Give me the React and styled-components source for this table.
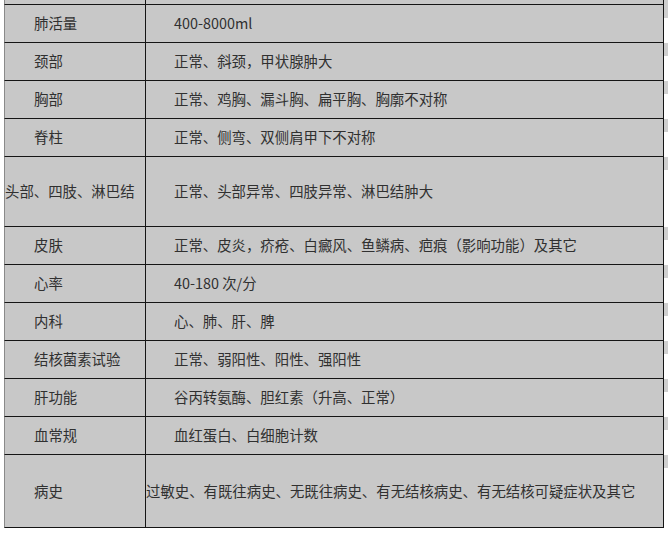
import React from "react";
import styled, { createGlobalStyle } from "styled-components";

const Global = createGlobalStyle`
  html, body { margin: 0; padding: 0; background: #ffffff; }
  body {
    font-family: "Noto Sans CJK SC", "Microsoft YaHei", "Noto Sans", sans-serif;
    color: #303030;
    overflow: hidden;
  }
`;

const Page = styled.div`
  width: 668px;
  height: 533px;
  padding-left: 4px;
  box-sizing: border-box;
  overflow: hidden;
  background: #ffffff;
`;

const Table = styled.div`
  display: flex;
  flex-direction: column;
`;

const Row = styled.div`
  display: grid;
  grid-template-columns: 142px 518px 1fr;
  height: ${(p) => p.$h}px;
`;

const Cell = styled.div`
  box-sizing: border-box;
  background: #c8c8c8;
  border-bottom: 1px solid #151515;
  display: flex;
  align-items: center;
  overflow: hidden;
  white-space: nowrap;
  font-size: 14.4px;
  line-height: 1;
  color: #303030;
`;

const Label = styled(Cell)`
  border-left: 1px solid #8a8a8a;
  border-right: 1px solid #151515;
  padding-left: ${(p) => (p.$indent ?? 29)}px;
`;

const Value = styled(Cell)`
  border-right: 1px solid #151515;
  padding-left: ${(p) => (p.$indent ?? 28)}px;
`;

const Tail = styled.div`
  background: ${(p) =>
    p.$full
      ? "#cfcfcf"
      : "linear-gradient(to bottom, #cfcfcf 0, #cfcfcf 13px, #ffffff 13px)"};
`;

const Text = styled.span`
  display: block;
  flex: none;
`;

const rows = [
  { label: "肺活量", value: "400-8000ml" },
  { label: "颈部", value: "正常、斜颈，甲状腺肿大" },
  { label: "胸部", value: "正常、鸡胸、漏斗胸、扁平胸、胸廓不对称" },
  { label: "脊柱", value: "正常、侧弯、双侧肩甲下不对称" },
  { label: "头部、四肢、淋巴结", value: "正常、头部异常、四肢异常、淋巴结肿大", h: 70, labelIndent: -2 },
  { label: "皮肤", value: "正常、皮炎，疥疮、白癜风、鱼鳞病、疤痕（影响功能）及其它" },
  { label: "心率", value: "40-180 次/分" },
  { label: "内科", value: "心、肺、肝、脾" },
  { label: "结核菌素试验", value: "正常、弱阳性、阳性、强阳性" },
  { label: "肝功能", value: "谷丙转氨酶、胆红素（升高、正常）" },
  { label: "血常规", value: "血红蛋白、白细胞计数" },
  {
    label: "病史",
    value: "过敏史、有既往病史、无既往病史、有无结核病史、有无结核可疑症状及其它",
    h: 73,
    valueIndent: -2,
  },
];

export default function App() {
  return (
    <>
      <Global />
      <Page>
        <Table>
          <Row $h={5}>
            <Label />
            <Value />
            <Tail $full />
          </Row>
          {rows.map((r) => (
            <Row key={r.label} $h={r.h || 38}>
              <Label $indent={r.labelIndent}>
                <Text>{r.label}</Text>
              </Label>
              <Value $indent={r.valueIndent}>
                <Text>{r.value}</Text>
              </Value>
              <Tail />
            </Row>
          ))}
        </Table>
      </Page>
    </>
  );
}
